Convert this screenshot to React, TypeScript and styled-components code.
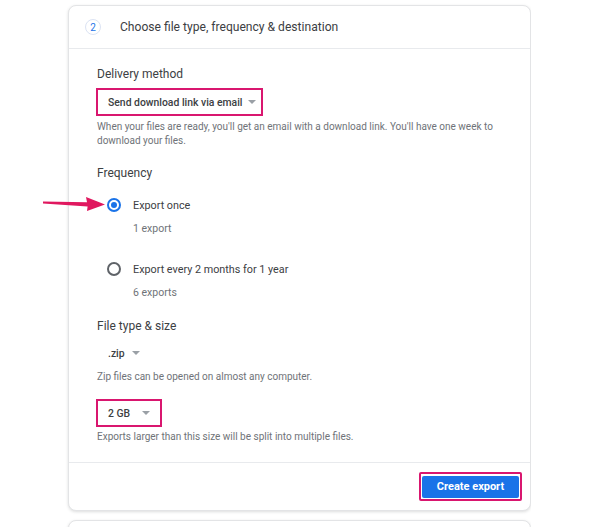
import styled, { createGlobalStyle } from 'styled-components';

const GlobalStyle = createGlobalStyle`
  body {
    margin: 0;
    background: #fff;
    font-family: Roboto, "Liberation Sans", Arial, sans-serif;
    color: #3c4043;
  }
`;

const Page = styled.div`
  position: relative;
  padding: 5px 0 0 68px;
  width: 463px;
  height: 522px;
  overflow: hidden;
`;

const Card = styled.div`
  background: #fff;
  border: 1px solid #e3e4e6;
  border-radius: 8px;
  box-shadow: 0 1px 3px rgba(60, 64, 67, 0.18);
`;

const NextCard = styled(Card)`
  margin-top: 9px;
  height: 40px;
`;

const Header = styled.div`
  display: flex;
  align-items: center;
  height: 42px;
  padding-left: 16px;
  gap: 19px;
  border-bottom: 1px solid #e8eaed;
`;

const StepBadge = styled.div`
  width: 16px;
  height: 16px;
  border-radius: 50%;
  border: 1px solid #dbe3f3;
  color: #1a73e8;
  font-size: 10px;
  display: flex;
  align-items: center;
  justify-content: center;
  box-sizing: border-box;
`;

const Title = styled.div`
  font-size: 12.1px;
  color: #3c4043;
`;

const Body = styled.div`
  padding: 15px 28px 18px 28px;
  border-bottom: 1px solid #e8eaed;
`;

const Label = styled.div<{ $gap?: number }>`
  font-size: 12px;
  line-height: 20px;
  color: #3c4043;
  margin-top: ${(p) => p.$gap ?? 0}px;
`;

const Select = styled.div<{ $marked?: boolean; $gap?: number; $caretGap: number; $padRight: number }>`
  display: inline-flex;
  align-items: center;
  gap: ${(p) => p.$caretGap}px;
  height: 28px;
  box-sizing: border-box;
  padding: 0 ${(p) => p.$padRight}px 0 10px;
  margin-left: -1px;
  margin-top: ${(p) => p.$gap ?? 0}px;
  border: 2px solid ${(p) => (p.$marked ? '#d9166f' : 'transparent')};
  font-size: 10.4px;
  font-weight: 500;
  color: #3c4043;
`;

const Caret = styled.span`
  width: 0;
  height: 0;
  border-left: 4px solid transparent;
  border-right: 4px solid transparent;
  border-top: 4px solid #9aa0a6;
`;

const Help = styled.div<{ $gap?: number }>`
  font-size: 10px;
  line-height: 14px;
  color: #6f7378;
  margin-top: ${(p) => p.$gap ?? 0}px;
`;

const Options = styled.div`
  display: flex;
  flex-direction: column;
`;

const Option = styled.div<{ $gap: number }>`
  margin-top: ${(p) => p.$gap}px;
`;

const OptionRow = styled.div`
  display: flex;
  align-items: center;
  height: 24px;
  gap: 12px;
  padding-left: 10px;
  font-size: 10.8px;
  color: #3c4043;
`;

const Radio = styled.span<{ $checked?: boolean }>`
  width: 14px;
  height: 14px;
  box-sizing: border-box;
  border-radius: 50%;
  border: 2px solid ${(p) => (p.$checked ? '#1a73e8' : '#5f6368')};
  display: flex;
  align-items: center;
  justify-content: center;

  &::after {
    content: '';
    width: 6px;
    height: 6px;
    border-radius: 50%;
    background: ${(p) => (p.$checked ? '#1a73e8' : 'transparent')};
  }
`;

const OptionSub = styled.div`
  margin-top: 4px;
  padding-left: 36px;
  font-size: 10.5px;
  line-height: 16px;
  color: #6f7378;
`;

const Footer = styled.div`
  display: flex;
  justify-content: flex-end;
  align-items: center;
  height: 47px;
  padding-right: 8px;
`;

const ButtonMark = styled.div`
  border: 2px solid #d9166f;
  padding: 1px;
  border-radius: 2px;
`;

const PrimaryButton = styled.button`
  width: 97px;
  height: 22px;
  border: none;
  border-radius: 2px;
  background: #1a73e8;
  color: #fff;
  font-family: Roboto, "Liberation Sans", Arial, sans-serif;
  font-size: 11px;
  font-weight: 700;
  padding: 0;
`;

const Arrow = styled.svg`
  position: absolute;
  left: 42px;
  top: 196px;
`;

const App = () => {
  return (
    <Page>
      <GlobalStyle />
      <Card>
        <Header>
          <StepBadge>2</StepBadge>
          <Title>Choose file type, frequency &amp; destination</Title>
        </Header>
        <Body>
          <Label>Delivery method</Label>
          <Select $marked $gap={4} $caretGap={5} $padRight={5}>
            Send download link via email <Caret />
          </Select>
          <Help $gap={4}>
            When your files are ready, you'll get an email with a download link. You'll have one week to
            <br />
            download your files.
          </Help>

          <Label $gap={15}>Frequency</Label>
          <Options>
            <Option $gap={10}>
              <OptionRow>
                <Radio $checked />
                Export once
              </OptionRow>
              <OptionSub>1 export</OptionSub>
            </Option>
            <Option $gap={20}>
              <OptionRow>
                <Radio />
                Export every 2 months for 1 year
              </OptionRow>
              <OptionSub>6 exports</OptionSub>
            </Option>
          </Options>

          <Label $gap={15}>File type &amp; size</Label>
          <div>
            <Select $gap={3} $caretGap={7} $padRight={8}>
              .zip <Caret />
            </Select>
          </div>
          <Help $gap={3}>Zip files can be opened on almost any computer.</Help>
          <div>
            <Select $marked $gap={15} $caretGap={12} $padRight={10}>
              2 GB <Caret />
            </Select>
          </div>
          <Help $gap={3}>Exports larger than this size will be split into multiple files.</Help>
        </Body>
        <Footer>
          <ButtonMark>
            <PrimaryButton>Create export</PrimaryButton>
          </ButtonMark>
        </Footer>
      </Card>
      <NextCard />

      <Arrow width="64" height="16" viewBox="0 0 64 16">
        <path d="M1 5.6 L45 6.2 L44 1 L63 8.6 L45 15 L45.6 10.6 L1 7.4 Z" fill="#e0185f" />
      </Arrow>
    </Page>
  );
};

export default App;
